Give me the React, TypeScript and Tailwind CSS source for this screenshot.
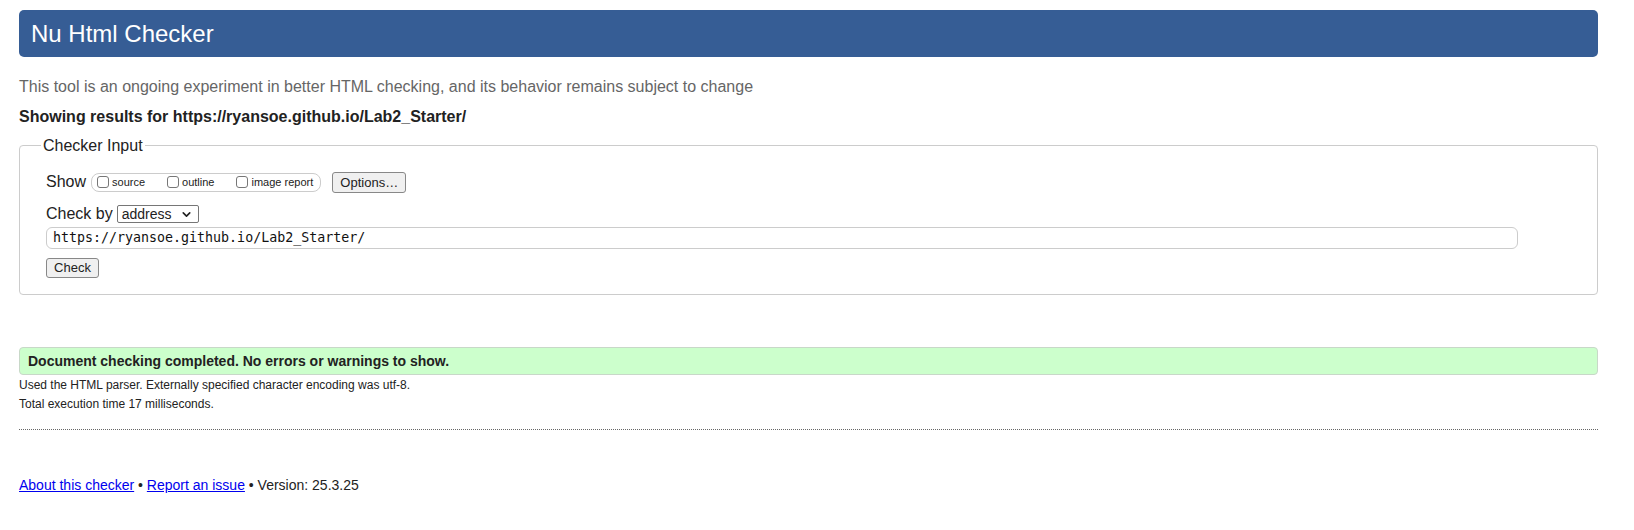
import { ChevronDown } from 'lucide-react';

const font = { fontFamily: '"Liberation Sans", Arial, sans-serif' };

function Box({ label }: { label: string }) {
  return (
    <label className="flex items-center mr-[22px] last:mr-[7px]">
      <span className="w-[12px] h-[12px] border border-[#777] rounded-[3px] bg-white mr-[3px]" />
      <span className="text-[11px] text-[#222]">{label}</span>
    </label>
  );
}

export default function App() {
  return (
    <div className="bg-white min-h-screen text-[#222]" style={font}>
      <div className="ml-[19px] w-[1579px] pt-[10px]">
        <h1 className="h-[47px] rounded-[5px] bg-[#365d95] text-white text-[24px] px-[12px] flex items-center">
          Nu Html Checker
        </h1>

        <p className="mt-[20px] text-[16px] leading-[20px] text-[#666]">
          This tool is an ongoing experiment in better HTML checking, and its behavior remains subject to change
        </p>
        <p className="mt-[10px] text-[16px] leading-[20px] font-bold">
          Showing results for https://ryansoe.github.io/Lab2_Starter/
        </p>

        <fieldset className="mt-[9px] border border-[#ccc] rounded-[4px] px-[26px] pb-[16px]">
          <legend className="px-[2px] -ml-[5px] text-[16px] leading-[19px]">Checker Input</legend>

          <div className="mt-[16px] flex items-center h-[22px]">
            <span className="text-[16px]">Show</span>
            <div className="ml-[5px] h-[19px] border border-[#ccc] rounded-[8px] pl-[5px] flex items-center">
              <Box label="source" />
              <Box label="outline" />
              <Box label="image report" />
            </div>
            <button className="ml-[11px] h-[21px] w-[74px] border border-[#888] rounded-[3px] bg-[#f0f0f0] text-[13px]">
              Options…
            </button>
          </div>

          <div className="mt-[11px] flex items-center h-[20px]">
            <span className="text-[16px]">Check by</span>
            <div className="ml-[4px] h-[18px] w-[82px] border border-[#767676] rounded-[2px] flex items-center justify-between pl-[4px] pr-[5px] text-[14px]">
              address
              <ChevronDown size={13} strokeWidth={3} />
            </div>
          </div>

          <div
            className="mt-[3px] h-[22px] w-[1472px] border border-[#ccc] rounded-[6px] flex items-center px-[6px] text-[13.3px] text-[#111]"
            style={{ fontFamily: '"DejaVu Sans Mono", monospace' }}
          >
            https://ryansoe.github.io/Lab2_Starter/
          </div>

          <button className="mt-[9px] h-[20px] w-[53px] border border-[#888] rounded-[3px] bg-[#f0f0f0] text-[13px] flex items-center justify-center">
            Check
          </button>
        </fieldset>

        <div className="mt-[52px] h-[28px] rounded-[4px] border border-[#c8d8c8] bg-[#ccffcc] flex items-center px-[8px] text-[14px] font-bold">
          Document checking completed. No errors or warnings to show.
        </div>

        <div className="border-b border-dotted border-[#666] pb-[15px]">
          <p className="mt-[1px] text-[12px] leading-[19px]">
            Used the HTML parser. Externally specified character encoding was utf-8.
          </p>
          <p className="text-[12px] leading-[19px]">Total execution time 17 milliseconds.</p>
        </div>

        <p className="mt-[45px] text-[14px] leading-[20px]">
          <a href="#" className="text-[#0000ee] underline">About this checker</a>
          {' • '}
          <a href="#" className="text-[#0000ee] underline">Report an issue</a>
          {' • Version: 25.3.25'}
        </p>
      </div>
    </div>
  );
}
